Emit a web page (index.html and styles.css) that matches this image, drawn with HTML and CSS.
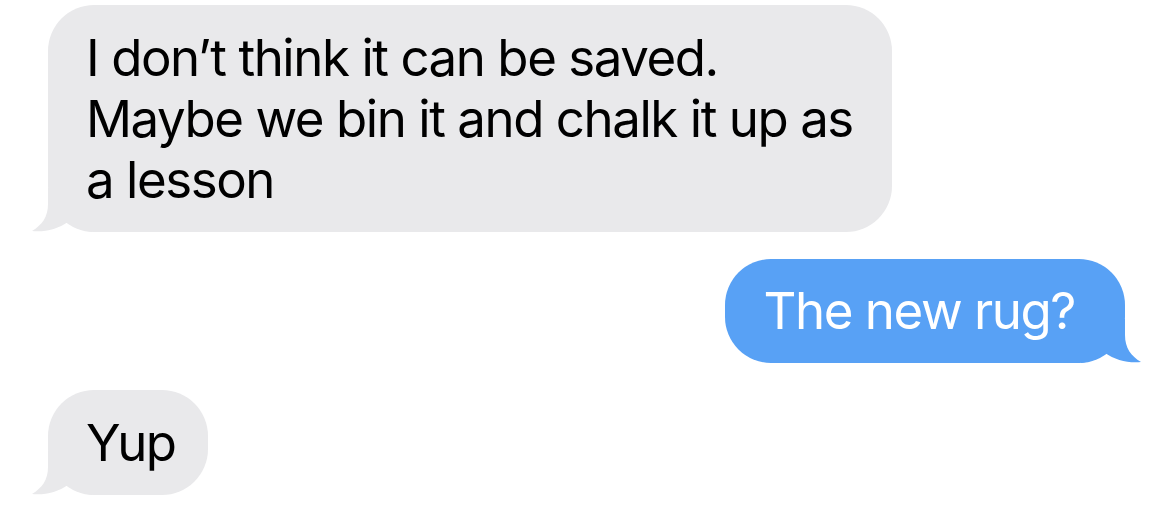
FILE: index.html
```html
<!DOCTYPE html>
<html>
  <head>
    <meta charset="UTF-8" />
    <title>Messages</title>
    <link rel="stylesheet" href="styles.css">
  </head>
  <body>
    <div class="thread">
      <div class="bubble received wide">
        I don’t think it can be saved. Maybe we bin it and chalk it up as a lesson
        <svg class="tail" viewBox="0 0 60 44" width="60" height="44">
          <path d="M16 0 L16 16 C16 29 10 37 0 43 C12 44.5 26 41 36 34 C44 40 52 43 60 44 L60 0 Z" />
        </svg>
      </div>

      <div class="bubble sent">
        The new rug?
        <svg class="tail" viewBox="0 0 60 44" width="60" height="44">
          <path d="M16 0 L16 16 C16 29 10 37 0 43 C12 44.5 26 41 36 34 C44 40 52 43 60 44 L60 0 Z" />
        </svg>
      </div>

      <div class="bubble received">
        Yup
        <svg class="tail" viewBox="0 0 60 44" width="60" height="44">
          <path d="M16 0 L16 16 C16 29 10 37 0 43 C12 44.5 26 41 36 34 C44 40 52 43 60 44 L60 0 Z" />
        </svg>
      </div>
    </div>
  </body>
</html>
```

FILE: styles.css
```css
body {
  margin: 0;
  background-color: #fff;
  font-family: Inter, "Liberation Sans", sans-serif;
}

.thread {
  display: flex;
  flex-direction: column;
  gap: 27px;
  padding: 5px 45px 0 48px;
}

.bubble {
  position: relative;
  isolation: isolate;
  box-sizing: border-box;
  width: fit-content;
  padding: 22px 32px 22px 38px;
  border-radius: 46px;
  font-size: 51px;
  line-height: 61px;
  letter-spacing: -1.45px;
}

.bubble.wide {
  max-width: 844px;
}

.received {
  align-self: flex-start;
  background-color: #e9e9eb;
  color: #000;
}

.sent {
  align-self: flex-end;
  padding: 21px 50px 22px 39px;
  background-color: #58a1f5;
  color: #fff;
}

.tail {
  position: absolute;
  z-index: -1;
  bottom: 0;
  left: -16px;
  display: block;
}

.received .tail {
  fill: #e9e9eb;
}

.sent .tail {
  left: auto;
  right: -16px;
  fill: #58a1f5;
  transform: scaleX(-1);
}
```
